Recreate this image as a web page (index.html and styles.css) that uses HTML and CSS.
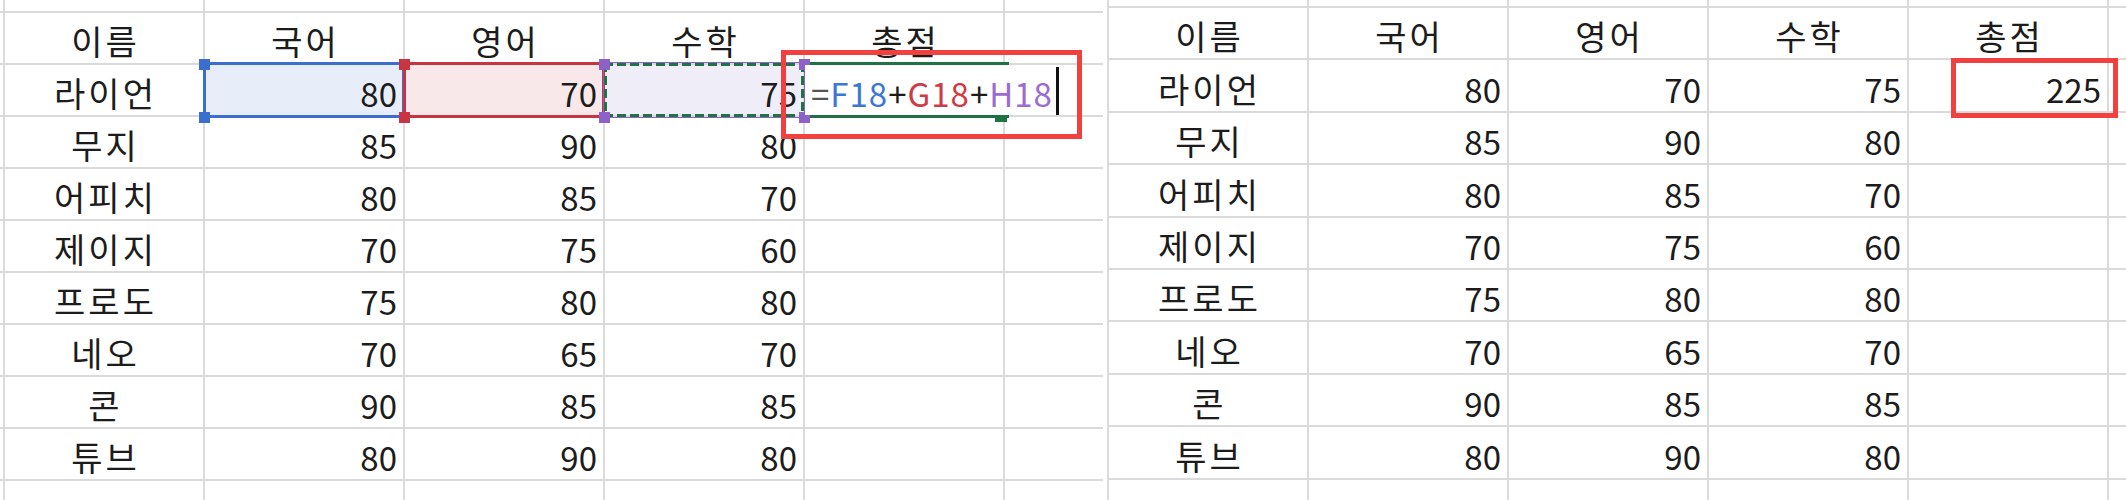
FILE: index.html
```html
<!DOCTYPE html>
<html lang="ko">
<head>
<meta charset="utf-8">
<title>총점 수식</title>
<link rel="stylesheet" href="styles.css">
</head>
<body>
<div class="sheets">
  <section class="sheet sheet-edit">
    <div class="grid grid-edit">
      <div class="c"></div><div class="c"></div><div class="c"></div><div class="c"></div><div class="c"></div><div class="c"></div><div class="c"></div>
      <div class="c"></div><div class="c txt">이름</div><div class="c txt">국어</div><div class="c txt">영어</div><div class="c txt">수학</div><div class="c txt">총점</div><div class="c"></div>
      <div class="c"></div><div class="c txt">라이언</div><div class="c num ref ref-blue">80</div><div class="c num ref ref-red">70</div><div class="c num ref ref-purple">75</div><div class="c active formula"><span class="op">=</span><span class="f-blue">F18</span><span class="plus">+</span><span class="f-red">G18</span><span class="plus">+</span><span class="f-purple">H18</span><span class="caret"></span></div>
      <div class="c"></div><div class="c txt">무지</div><div class="c num">85</div><div class="c num">90</div><div class="c num">80</div><div class="c"></div><div class="c"></div>
      <div class="c"></div><div class="c txt">어피치</div><div class="c num">80</div><div class="c num">85</div><div class="c num">70</div><div class="c"></div><div class="c"></div>
      <div class="c"></div><div class="c txt">제이지</div><div class="c num">70</div><div class="c num">75</div><div class="c num">60</div><div class="c"></div><div class="c"></div>
      <div class="c"></div><div class="c txt">프로도</div><div class="c num">75</div><div class="c num">80</div><div class="c num">80</div><div class="c"></div><div class="c"></div>
      <div class="c"></div><div class="c txt">네오</div><div class="c num">70</div><div class="c num">65</div><div class="c num">70</div><div class="c"></div><div class="c"></div>
      <div class="c"></div><div class="c txt">콘</div><div class="c num">90</div><div class="c num">85</div><div class="c num">85</div><div class="c"></div><div class="c"></div>
      <div class="c"></div><div class="c txt">튜브</div><div class="c num">80</div><div class="c num">90</div><div class="c num">80</div><div class="c"></div><div class="c"></div>
      <div class="c"></div><div class="c"></div><div class="c"></div><div class="c"></div><div class="c"></div><div class="c"></div><div class="c"></div>
    </div>
    <div class="callout callout-edit"></div>
  </section>

  <section class="sheet sheet-result">
    <div class="grid grid-result">
      <div class="c"></div><div class="c"></div><div class="c"></div><div class="c"></div><div class="c"></div><div class="c"></div>
      <div class="c txt">이름</div><div class="c txt">국어</div><div class="c txt">영어</div><div class="c txt">수학</div><div class="c txt">총점</div><div class="c"></div>
      <div class="c txt">라이언</div><div class="c num">80</div><div class="c num">70</div><div class="c num">75</div><div class="c num">225</div><div class="c"></div>
      <div class="c txt">무지</div><div class="c num">85</div><div class="c num">90</div><div class="c num">80</div><div class="c"></div><div class="c"></div>
      <div class="c txt">어피치</div><div class="c num">80</div><div class="c num">85</div><div class="c num">70</div><div class="c"></div><div class="c"></div>
      <div class="c txt">제이지</div><div class="c num">70</div><div class="c num">75</div><div class="c num">60</div><div class="c"></div><div class="c"></div>
      <div class="c txt">프로도</div><div class="c num">75</div><div class="c num">80</div><div class="c num">80</div><div class="c"></div><div class="c"></div>
      <div class="c txt">네오</div><div class="c num">70</div><div class="c num">65</div><div class="c num">70</div><div class="c"></div><div class="c"></div>
      <div class="c txt">콘</div><div class="c num">90</div><div class="c num">85</div><div class="c num">85</div><div class="c"></div><div class="c"></div>
      <div class="c txt">튜브</div><div class="c num">80</div><div class="c num">90</div><div class="c num">80</div><div class="c"></div><div class="c"></div>
      <div class="c"></div><div class="c"></div><div class="c"></div><div class="c"></div><div class="c"></div><div class="c"></div>
    </div>
    <div class="callout callout-result"></div>
  </section>
</div>
</body>
</html>
```

FILE: styles.css
```css
html, body {
  margin: 0;
  padding: 0;
  background: #ffffff;
}

body {
  width: 2126px;
  height: 500px;
  overflow: hidden;
  font-family: "Noto Sans CJK KR", "Noto Sans", sans-serif;
  font-size: 33px;
  color: #1c1c1c;
}

.sheets {
  display: flex;
  height: 500px;
}

.sheet {
  position: relative;
  height: 500px;
  overflow: hidden;
}

.sheet-edit {
  width: 1103px;
}

.sheet-result {
  margin-left: 4px;
  flex: 1;
}

.grid {
  display: grid;
  gap: 2px;
  height: 500px;
  background: #dadada;
}

.grid-edit {
  grid-template-columns: 3px repeat(5, 198px) 1fr;
  grid-template-rows: 11px repeat(9, 50px) 1fr;
}

.grid-result {
  padding-left: 2px;
  grid-template-columns: repeat(5, 198px) 1fr;
  grid-template-rows: 6px repeat(9, 50.4px) 1fr;
}

.c {
  background: #ffffff;
  display: flex;
  align-items: flex-end;
  line-height: 44px;
  white-space: nowrap;
  min-width: 0;
}

.txt {
  justify-content: center;
  font-size: 34px;
  letter-spacing: 3px;
  padding-left: 3px;
}

.num {
  justify-content: flex-end;
  padding-right: 6px;
}

/* referenced cells while editing the formula */
.ref {
  position: relative;
}

.ref::before {
  content: "";
  position: absolute;
  top: -3px;
  bottom: -3px;
  left: -2px;
  right: -2px;
  box-sizing: border-box;
  border: 3px solid transparent;
}

.ref::after {
  content: "";
  position: absolute;
  left: -6px;
  top: -6px;
  width: 11px;
  height: 11px;
}

.ref-blue {
  background: #e8eef9;
}
.ref-blue::before {
  border-color: #3a6fd0;
}
.ref-blue::after {
  background: #3a6fd0;
  box-shadow: 0 53px 0 #3a6fd0;
}

.ref-red {
  background: #f9e8e9;
}
.ref-red::before {
  border-color: #c8343f;
}
.ref-red::after {
  background: #c8343f;
  box-shadow: 0 53px 0 #c8343f;
}

.ref-purple {
  background: #efedf8;
}
.ref-purple::before {
  border: 1px solid #8d62c8;
  background:
    repeating-linear-gradient(90deg, #1f7244 0 9px, transparent 9px 13px) left top / 100% 3px no-repeat,
    repeating-linear-gradient(90deg, #1f7244 0 9px, transparent 9px 13px) left bottom / 100% 3px no-repeat,
    repeating-linear-gradient(180deg, #1f7244 0 9px, transparent 9px 13px) left top / 3px 100% no-repeat,
    repeating-linear-gradient(180deg, #1f7244 0 9px, transparent 9px 13px) right top / 3px 100% no-repeat;
}
.ref-purple::after {
  background: #8d62c8;
  box-shadow: 0 53px 0 #8d62c8, 200px 0 0 #8d62c8, 200px 53px 0 #8d62c8;
}

/* active cell with the formula being typed */
.active {
  grid-column: span 2;
  position: relative;
  padding-left: 6px;
  letter-spacing: 1px;
}

.active::before {
  content: "";
  position: absolute;
  left: 5px;
  width: 199px;
  top: -3px;
  height: 50px;
  border-top: 3px solid #1f7244;
  border-bottom: 3px solid #1f7244;
}

.active::after {
  content: "";
  position: absolute;
  left: 190px;
  top: 50px;
  width: 12px;
  height: 7px;
  background: #1f7244;
}

.op {
  color: #555555;
}
.plus {
  color: #1c1c1c;
}
.f-blue {
  color: #3b78d6;
}
.f-red {
  color: #d03a45;
}
.f-purple {
  color: #9a6bd2;
}

.caret {
  align-self: flex-end;
  width: 3px;
  height: 48px;
  margin-left: 3px;
  background: #111111;
}

/* red annotation boxes */
.callout {
  position: absolute;
  box-sizing: border-box;
  border: 5px solid #f2403f;
}

.callout-edit {
  left: 781px;
  top: 50px;
  width: 301px;
  height: 89px;
}

.callout-result {
  left: 844px;
  top: 58px;
  width: 167px;
  height: 60px;
}
```
